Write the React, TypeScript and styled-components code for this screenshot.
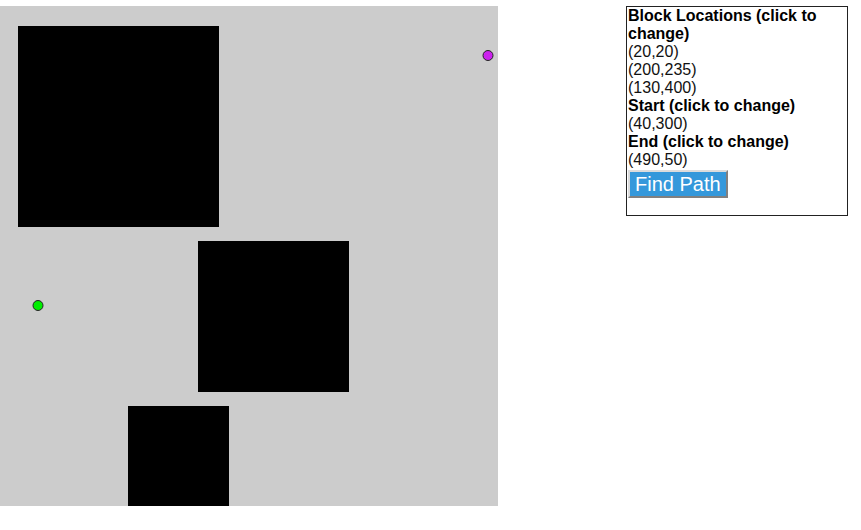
import React from 'react';
import styled, { createGlobalStyle } from 'styled-components';

const GlobalStyle = createGlobalStyle`
  body {
    margin: 0;
    background: #fff;
    font-family: "Liberation Sans", Arial, sans-serif;
  }
`;

const Page = styled.div`
  display: flex;
  align-items: flex-start;
  gap: 128px;
  padding-top: 6px;
`;

const Board = styled.svg`
  display: block;
  width: 498px;
  height: 500px;
  background: #cccccc;
`;

const Panel = styled.div`
  width: 219px;
  height: 208px;
  border: 1px solid #222;
  padding: 0 0 0 1px;
  font-size: 16px;
  line-height: 18px;
  color: #111;
`;

const Heading = styled.div`
  font-weight: bold;
  color: #000;
`;

const Coord = styled.div``;

const FindButton = styled.button`
  font-family: "Liberation Sans", Arial, sans-serif;
  font-size: 20px;
  line-height: 24px;
  color: #fff;
  background: #3498db;
  border: 2px solid;
  border-color: #dcdcdc #808080 #808080 #dcdcdc;
  padding: 0 5px;
  margin-top: 1px;
  cursor: pointer;
`;

const blocks = [
  { x: 20, y: 20, size: 200 },
  { x: 200, y: 235, size: 150 },
  { x: 130, y: 400, size: 100 },
];
const start = { x: 40, y: 300 };
const end = { x: 490, y: 50 };

export default function App() {
  return (
    <>
      <GlobalStyle />
      <Page>
        <Board viewBox="2 0 498 500">
          {blocks.map(b => (
            <rect key={`${b.x}-${b.y}`} x={b.x} y={b.y} width={b.size + 1} height={b.size + 1} fill="#000" />
          ))}
          <circle cx={start.x} cy={start.y - 0.5} r={5} fill="#00ee00" stroke="#222" strokeWidth={1} />
          <circle cx={end.x} cy={end.y - 0.5} r={5} fill="#cc22ee" stroke="#222" strokeWidth={1} />
        </Board>
        <Panel>
          <Heading>Block Locations (click to change)</Heading>
          {blocks.map(b => (
            <Coord key={`${b.x}-${b.y}`}>({b.x},{b.y})</Coord>
          ))}
          <Heading>Start (click to change)</Heading>
          <Coord>({start.x},{start.y})</Coord>
          <Heading>End (click to change)</Heading>
          <Coord>({end.x},{end.y})</Coord>
          <FindButton>Find Path</FindButton>
        </Panel>
      </Page>
    </>
  );
}
